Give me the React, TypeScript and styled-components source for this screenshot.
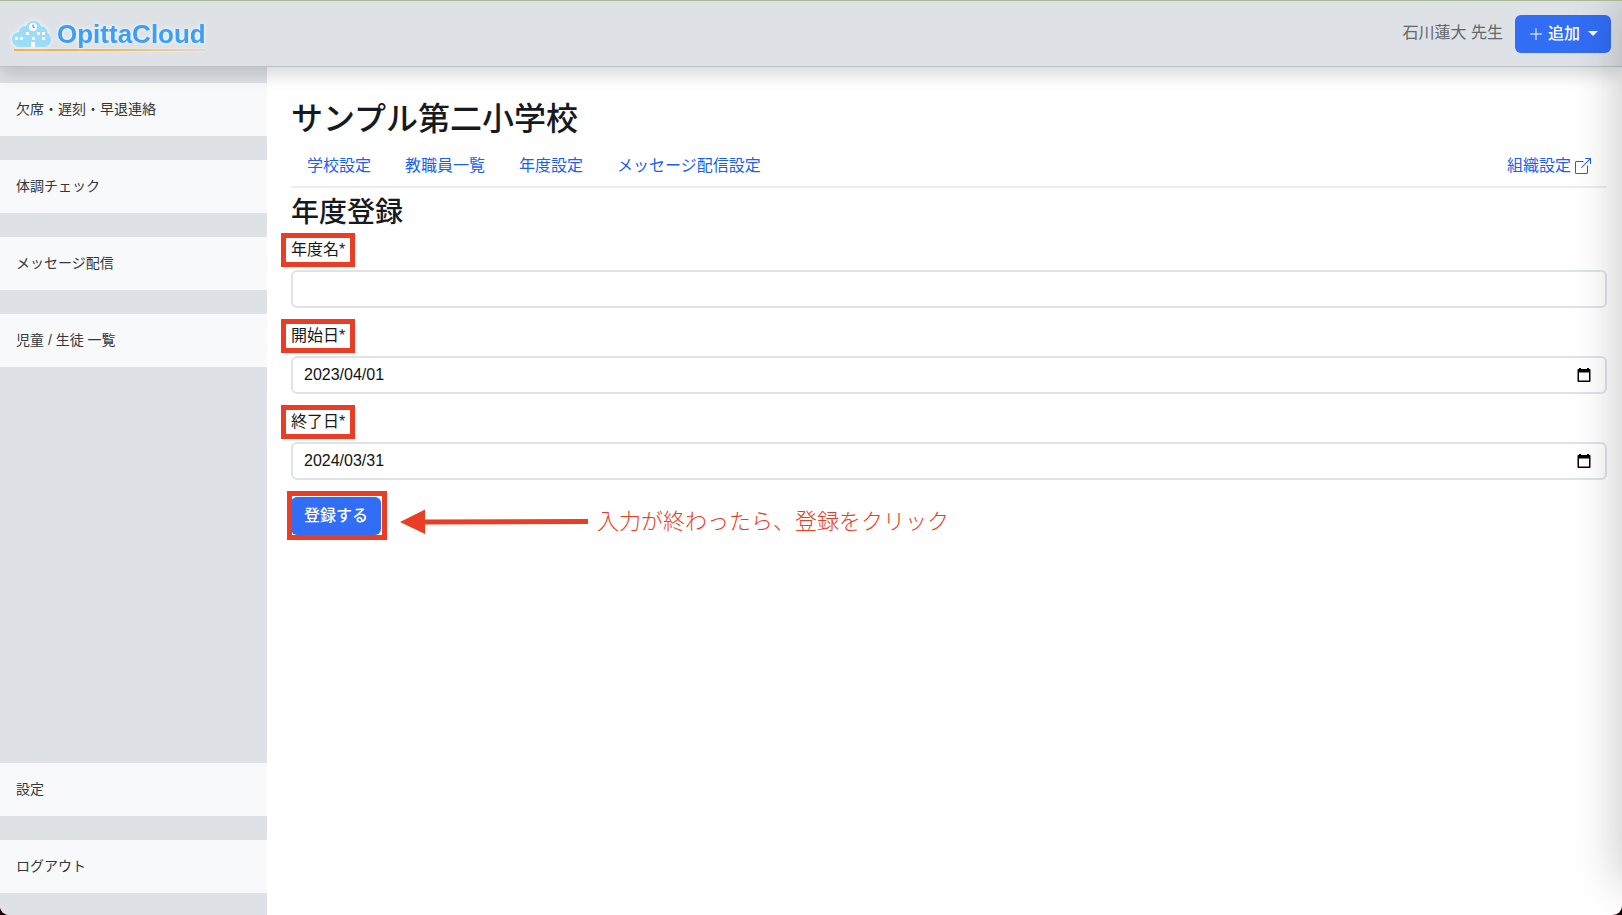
import React, { useState } from 'react';
import styled, { createGlobalStyle, css } from 'styled-components';
import { BsBoxArrowUpRight, BsPlusLg } from 'react-icons/bs';

const GlobalStyle = createGlobalStyle`
  *, *::before, *::after { box-sizing: border-box; }
  body {
    margin: 0;
    background: #1c0009;
    color: #16191d;
    font-family: "Liberation Sans", "Noto Sans CJK JP", sans-serif;
    font-size: 16px;
    line-height: 24px;
  }
  button, input { font: inherit; }
  h1, h2, p { margin: 0; }
  a { text-decoration: none; }
`;

const Page = styled.div`
  position: relative;
  display: flex;
  flex-direction: column;
  min-height: 100vh;
  overflow: hidden;
  background: #fff;
  border-top: 1px solid #a9b998;
  border-radius: 0 0 9px 9px;
`;

const EdgeShadow = styled.div`
  position: absolute;
  z-index: 3;
  top: 0;
  bottom: 32px;
  left: 100%;
  width: 40px;
  box-shadow: 0 0 48px rgba(0, 0, 0, 0.26);
  pointer-events: none;
`;

const Header = styled.header`
  position: relative;
  z-index: 2;
  display: flex;
  align-items: center;
  justify-content: space-between;
  height: 66px;
  padding: 0 11px 0 12px;
  background: #dee2e6;
  border-bottom: 1px solid #bcc0c4;
  box-shadow: 0 8px 16px rgba(0, 0, 0, 0.15);
`;

const Brand = styled.a`
  display: flex;
  flex-direction: column;
  padding-top: 2px;
  color: #3b9ff5;
`;

const BrandRow = styled.span`
  display: flex;
  align-items: center;
  gap: 5px;
  height: 30px;
  filter: drop-shadow(0 0 2px rgba(255, 255, 255, 0.9));
`;

const BrandName = styled.span`
  font-size: 26px;
  font-weight: 700;
  line-height: 30px;
`;

const BrandRule = styled.span`
  height: 2px;
  margin-left: 2px;
  background: linear-gradient(90deg, #f0ad3d, #efb95f 50%, #e4d9c8);
  box-shadow: 0 0 2px #fff;
`;

const UserArea = styled.div`
  display: flex;
  align-items: center;
  gap: 12px;
`;

const UserName = styled.span`
  padding-bottom: 2px;
  color: #63676b;
`;

const Button = styled.button`
  display: inline-flex;
  align-items: center;
  height: 38px;
  padding: 0 13px;
  border: 0;
  border-radius: 6px;
  background: #316df5;
  color: #fff;
  font-weight: 500;
  white-space: nowrap;
  cursor: pointer;
`;

const AddLabel = styled.span`
  margin: 0 8px 0 4px;
`;

const Caret = styled.span`
  border: 5px solid transparent;
  border-top-color: currentColor;
  border-bottom: 0;
`;

const Body = styled.div`
  display: flex;
  flex: 1;
`;

const Sidebar = styled.nav`
  display: flex;
  flex: none;
  flex-direction: column;
  justify-content: space-between;
  width: 267px;
  padding: 16px 0 22px;
  background: #dee1e6;
`;

const SideGroup = styled.div`
  display: flex;
  flex-direction: column;
  gap: 24px;
`;

const SideLink = styled.a`
  display: flex;
  align-items: center;
  height: 53px;
  padding: 0 16px 2px;
  background: #f8f9fb;
  color: #33373a;
  font-size: 14px;
`;

const Main = styled.main`
  flex: 1;
  min-width: 0;
  padding: 33px 15px 32px 24px;
`;

const Title = styled.h1`
  margin-bottom: 8px;
  font-size: 32px;
  font-weight: 500;
  line-height: 38px;
`;

const Tabs = styled.nav`
  display: flex;
  gap: 2px;
  margin-bottom: 8px;
  border-bottom: 2px solid #ebecee;
`;

const Tab = styled.a<{ $end?: boolean }>`
  display: flex;
  align-items: center;
  gap: 4px;
  padding: 8px 16px;
  color: #1b5ff0;
  ${({ $end }) => $end && css`margin-left: auto;`}
`;

const SubTitle = styled.h2`
  margin-bottom: 8px;
  font-size: 28px;
  font-weight: 500;
  line-height: 34px;
`;

const Field = styled.div`
  margin-bottom: 16px;
`;

const Label = styled.label`
  position: relative;
  display: block;
  width: fit-content;
  margin-bottom: 8px;

  &::after {
    content: '';
    position: absolute;
    inset: -5px -10px;
    border: 5px solid #e93e25;
    pointer-events: none;
  }
`;

const InputBox = styled.div`
  display: flex;
  align-items: center;
  height: 38px;
  padding-right: 14px;
  border: 2px solid #dfe2e7;
  border-radius: 6px;
  background: #fff;
`;

const Input = styled.input`
  flex: 1;
  min-width: 0;
  padding: 0 11px;
  border: 0;
  outline: 0;
  background: transparent;
  color: #101214;
`;

const PickerButton = styled.button`
  display: flex;
  padding: 0;
  border: 0;
  background: none;
  color: #000;
  cursor: pointer;
`;

const SubmitRow = styled.div`
  display: flex;
  align-items: center;
`;

const SubmitFrame = styled.div`
  position: relative;
  display: flex;

  &::after {
    content: '';
    position: absolute;
    inset: -6px -6px -5px -4px;
    border: 5px solid #e93e25;
    pointer-events: none;
  }
`;

const Note = styled.p`
  display: flex;
  align-items: center;
  gap: 8px;
  margin: 12px 0 0 19px;
  color: #e93e25;
  font-size: 22px;
  font-weight: 300;
  line-height: 28px;
`;

const CloudLogo = () => (
  <svg width="40" height="28" viewBox="0 0 40 28" aria-hidden="true">
    <path
      d="M8 27C3.500 27 0 23.500 0 19.500C0 15.500 3 12.300 7 12C7.500 8 10.500 5.500 14 6C15.500 2.500 18 1 21.500 1C25.500 1 28 3 29 6.300C33 6.500 35.500 9.500 35.500 13C38 14.500 39 17 39 19.500C39 23.500 36 27 31.500 27Z"
      fill="#9bdcfb"
    />
    <circle cx="21" cy="7" r="4" fill="#fff" />
    <path d="M21 4.500V7.200H23" fill="none" stroke="#777" strokeWidth="1" />
    <path
      d="M14 12h3v3h-3zM25 12h3v3h-3zM30 12h3v3h-3zM3 17h3v3H3zM8 17h3v3H8zM20 17h3v3h-3zM30 17h3v3h-3zM19 22h4v5h-4z"
      fill="#fff"
    />
  </svg>
);

const CalendarIcon = () => (
  <svg width="14" height="15" viewBox="0 0 14 15" aria-hidden="true">
    <path
      fill="currentColor"
      fillRule="evenodd"
      d="M2 0H4V1H10V0H12V1H12.500Q13.500 1 13.500 2V13Q13.500 14 12.500 14H1.500Q.5 14 .5 13V2Q.5 1 1.500 1H2ZM2 4.500V12.600H12V4.500Z"
    />
  </svg>
);

const Arrow = () => (
  <svg width="189" height="26" viewBox="0 0 189 26" aria-hidden="true">
    <path d="M0 13L25 0.500V10.500L188 10V15L25 15.500V25Z" fill="#e93e25" />
  </svg>
);

const topLinks = ['欠席・遅刻・早退連絡', '体調チェック', 'メッセージ配信', '児童 / 生徒 一覧'];
const bottomLinks = ['設定', 'ログアウト'];
const tabs = ['学校設定', '教職員一覧', '年度設定', 'メッセージ配信設定'];

const fields = [
  { id: 'year-name', label: '年度名*', initial: '', date: false },
  { id: 'start-date', label: '開始日*', initial: '2023/04/01', date: true },
  { id: 'end-date', label: '終了日*', initial: '2024/03/31', date: true },
];

const FormField = ({ id, label, initial, date }: (typeof fields)[number]) => {
  const [value, setValue] = useState(initial);
  return (
    <Field>
      <Label htmlFor={id}>{label}</Label>
      <InputBox>
        <Input id={id} type="text" value={value} onChange={(e) => setValue(e.target.value)} />
        {date && (
          <PickerButton type="button" aria-label="カレンダーを開く">
            <CalendarIcon />
          </PickerButton>
        )}
      </InputBox>
    </Field>
  );
};

export default function App() {
  return (
    <>
      <GlobalStyle />
      <Page>
        <Header>
          <Brand href="#">
            <BrandRow>
              <CloudLogo />
              <BrandName>OpittaCloud</BrandName>
            </BrandRow>
            <BrandRule />
          </Brand>
          <UserArea>
            <UserName>石川蓮大 先生</UserName>
            <Button type="button">
              <BsPlusLg size={16} aria-hidden="true" />
              <AddLabel>追加</AddLabel>
              <Caret />
            </Button>
          </UserArea>
        </Header>
        <Body>
          <Sidebar>
            <SideGroup>
              {topLinks.map((text) => (
                <SideLink key={text} href="#">{text}</SideLink>
              ))}
            </SideGroup>
            <SideGroup>
              {bottomLinks.map((text) => (
                <SideLink key={text} href="#">{text}</SideLink>
              ))}
            </SideGroup>
          </Sidebar>
          <Main>
            <Title>サンプル第二小学校</Title>
            <Tabs>
              {tabs.map((text) => (
                <Tab key={text} href="#">{text}</Tab>
              ))}
              <Tab href="#" $end>
                組織設定
                <BsBoxArrowUpRight size={16} aria-hidden="true" />
              </Tab>
            </Tabs>
            <SubTitle>年度登録</SubTitle>
            <form onSubmit={(e) => e.preventDefault()}>
              {fields.map((field) => (
                <FormField key={field.id} {...field} />
              ))}
              <SubmitRow>
                <SubmitFrame>
                  <Button type="submit">登録する</Button>
                </SubmitFrame>
                <Note>
                  <Arrow />
                  入力が終わったら、登録をクリック
                </Note>
              </SubmitRow>
            </form>
          </Main>
        </Body>
        <EdgeShadow />
      </Page>
    </>
  );
}
